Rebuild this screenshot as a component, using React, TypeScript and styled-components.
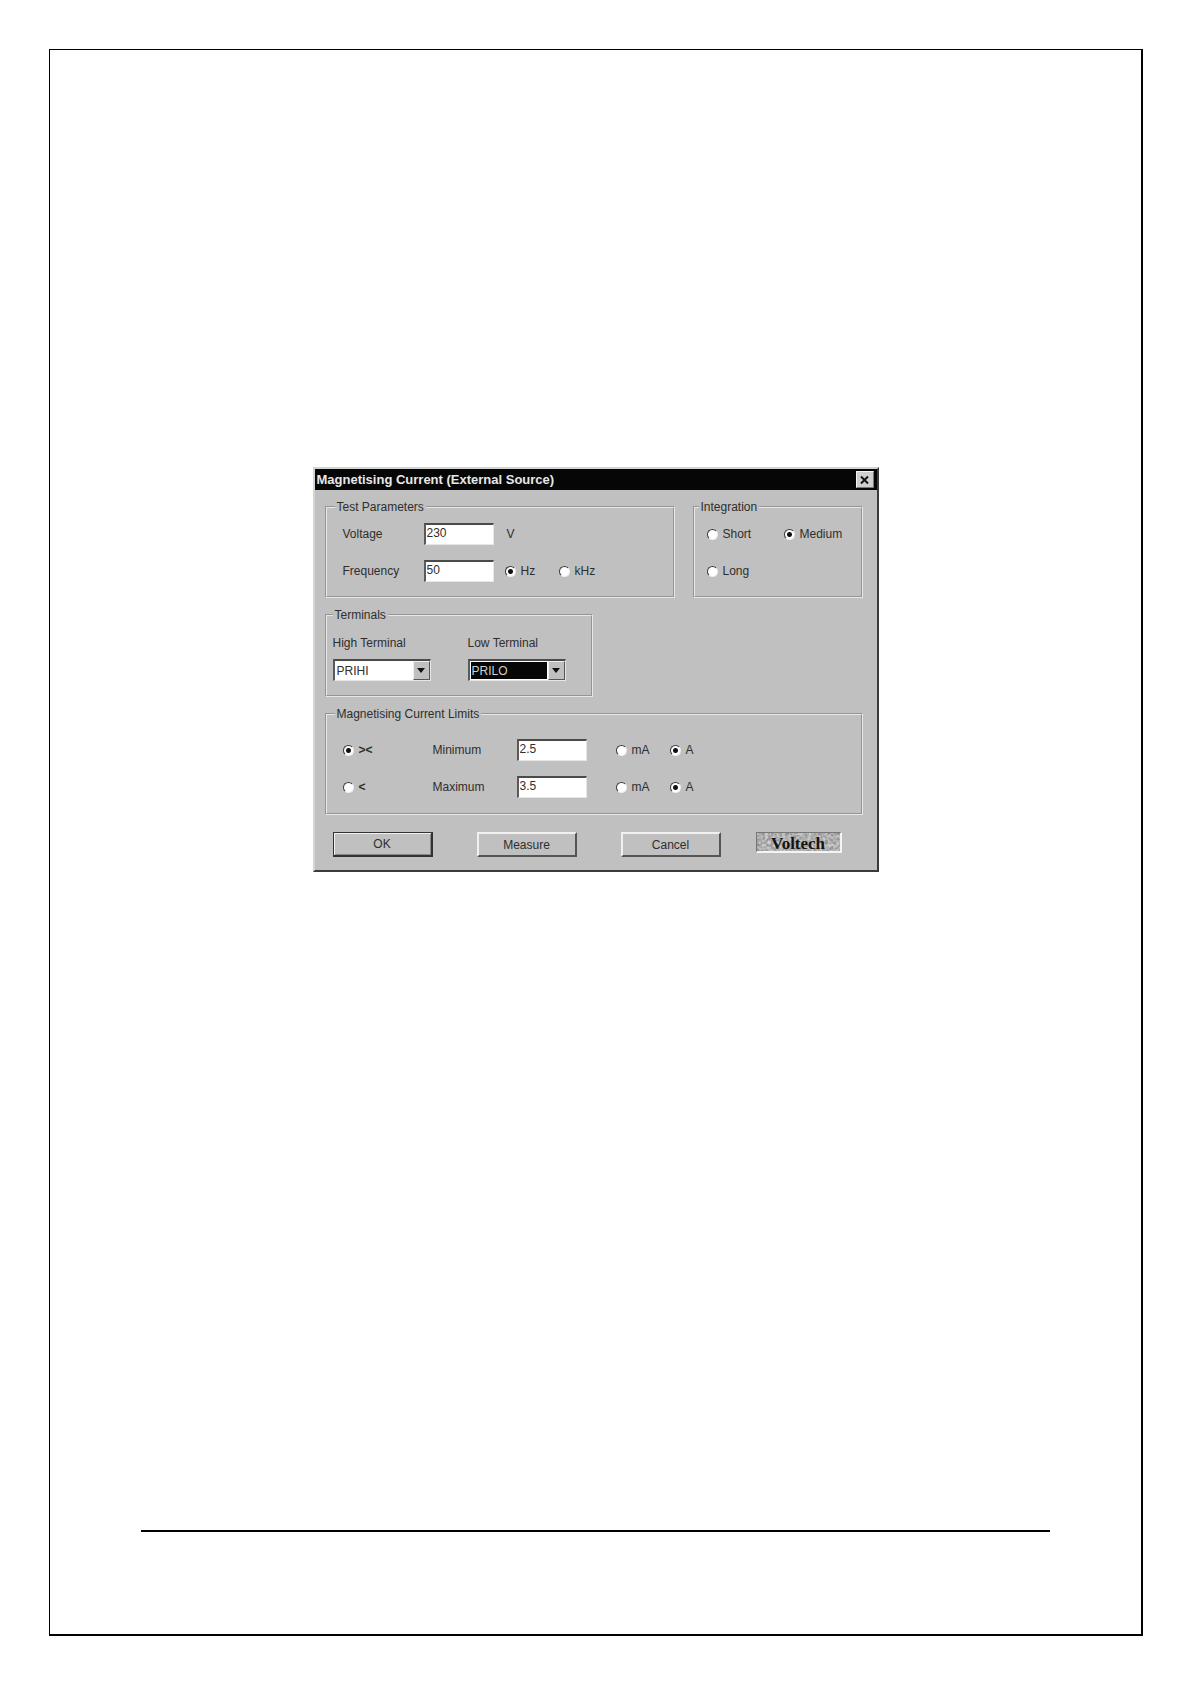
import React, { useId } from "react";
import styled, { createGlobalStyle } from "styled-components";

const face = "#c0c0c0";
const ink = "#2e2e2e";

const GlobalStyle = createGlobalStyle`
  *, *::before, *::after { box-sizing: border-box; }
  body {
    margin: 0;
    background: #fff;
    color: ${ink};
    font: 12px/16px "Liberation Sans", Arial, sans-serif;
  }
  button, input, select { font: inherit; color: inherit; margin: 0; border-radius: 0; }
`;

const Sheet = styled.main`
  display: flex;
  flex-direction: column;
  min-height: calc(100vh - 97px);
  margin: 49px 48px 48px 49px;
  padding: 417px 91px 102px;
  border: solid #000;
  border-width: 1px 2px 2px 1px;
`;

const Rule = styled.hr`
  width: 100%;
  height: 2px;
  margin: auto 0 0;
  border: 0;
  background: #000;
`;

const Dialog = styled.form`
  width: 100%;
  max-width: 566px;
  margin: 0 auto 32px;
  background: ${face};
  border: solid;
  border-width: 2px;
  border-color: #d4d4d4 #3a3a3a #3a3a3a #d4d4d4;
`;

const TitleBar = styled.header`
  display: flex;
  align-items: center;
  justify-content: space-between;
  height: 21px;
  padding: 0 3px 0 2px;
  background: #060606;
`;

const Title = styled.h1`
  margin: 0;
  color: #e8e8e8;
  font-size: 13px;
  line-height: 16px;
  font-weight: 700;
`;

const CloseButton = styled.button`
  display: grid;
  place-items: center;
  width: 18px;
  height: 17px;
  padding: 0;
  background: #cfcfcf;
  border: 1px solid;
  border-color: #f4f4f4 #777 #777 #f4f4f4;
`;

const Body = styled.div`
  display: flex;
  flex-direction: column;
  gap: 9px;
  padding: 9px 14px 13px 10px;
`;

const TopRow = styled.div`
  display: grid;
  grid-template-columns: minmax(0, 1fr) 170px;
  gap: 18px;
`;

const Group = styled.fieldset<{ $pad: string; $width?: string }>`
  width: ${(p) => p.$width ?? "auto"};
  min-width: 0;
  margin: 0;
  padding: ${(p) => p.$pad};
  border: 2px groove #e8e8e8;
`;

const Legend = styled.legend<{ $flush?: boolean }>`
  margin-left: ${(p) => (p.$flush ? 0 : -8)}px;
  padding: 0 2px;
  line-height: 16px;
`;

const Rows = styled.div`
  display: flex;
  flex-direction: column;
  gap: 15px;
`;

const ParameterRow = styled.div`
  display: grid;
  grid-template-columns: 81px 70px 1fr;
  align-items: center;
`;

const LimitRow = styled.div`
  display: grid;
  grid-template-columns: 90px 84px 70px 1fr;
  align-items: center;
`;

const Units = styled.div<{ $indent: number }>`
  display: flex;
  padding-left: ${(p) => p.$indent}px;
`;

const Field = styled.input`
  width: 100%;
  height: 22px;
  padding: 0 1px 3px;
  background: #fff;
  border: solid;
  border-width: 2px 1px 1px 2px;
  border-color: #4a4a4a #e6e6e6 #e6e6e6 #5a5a5a;
  outline: 0;
`;

const OptionLabel = styled.label<{ $width: number; $strong?: boolean }>`
  display: flex;
  align-items: center;
  gap: 5px;
  width: ${(p) => p.$width}px;
  height: 22px;
  font-weight: ${(p) => (p.$strong ? 700 : 400)};
`;

const Radio = styled.input`
  appearance: none;
  width: 11px;
  height: 11px;
  border: 1px solid;
  border-color: #3a3a3a #eee #eee #3a3a3a;
  border-radius: 50%;
  background: #fff;

  &:checked {
    background: radial-gradient(circle, #111 0 2px, #fff 3px);
  }
`;

const Choices = styled.div`
  display: grid;
  grid-template-columns: 77px 1fr;
  row-gap: 15px;
`;

const Terminals = styled.div`
  display: grid;
  grid-template-columns: 98px 98px;
  column-gap: 37px;
`;

const Terminal = styled.div`
  display: flex;
  flex-direction: column;
  gap: 8px;
`;

const Combo = styled.div`
  position: relative;
  height: 22px;
  padding: 1px;
  background: #fff;
  border: solid;
  border-width: 2px 1px 1px 2px;
  border-color: #4a4a4a #e6e6e6 #e6e6e6 #5a5a5a;
`;

const Select = styled.select<{ $active?: boolean }>`
  appearance: none;
  display: block;
  width: calc(100% - 17px);
  height: 17px;
  padding: 0 1px;
  border: 0;
  outline: 0;
  line-height: 16px;
  background: ${(p) => (p.$active ? "#060606" : "#fff")};
  color: ${(p) => (p.$active ? "#d0d0d0" : ink)};
`;

const Arrow = styled.span`
  position: absolute;
  top: 0;
  right: 0;
  display: grid;
  place-items: center;
  width: 17px;
  height: 19px;
  background: ${face};
  border: 1px solid;
  border-color: #eee #555 #555 #eee;
  pointer-events: none;
`;

const Actions = styled.div`
  display: flex;
  gap: 44px;
  padding: 8px 0 0 8px;
`;

const ActionButton = styled.button<{ $primary?: boolean }>`
  width: 100px;
  height: 25px;
  padding: 0;
  background: ${face};
  border: solid;
  border-width: ${(p) => (p.$primary ? "1px 2px 2px 1px" : "2px")};
  border-color: ${(p) =>
    p.$primary ? "#333" : "#f0f0f0 #555 #555 #f0f0f0"};
  box-shadow: ${(p) =>
    p.$primary ? "inset 1px 1px #f0f0f0, inset -1px -1px #888" : "none"};
`;

const Logo = styled.div`
  position: relative;
  width: 86px;
  height: 21px;
  margin-left: -9px;
  border: solid;
  border-width: 1px 2px 2px 1px;
  border-color: #777 #f4f4f4 #f4f4f4 #777;
  background: #b0b0b0;
  color: #141414;
  text-align: center;
  font: 700 17px/21px "Liberation Serif", "Times New Roman", serif;
`;

const Grain = styled.svg`
  position: absolute;
  inset: 0;
  width: 100%;
  height: 100%;
`;

const LogoText = styled.span`
  position: relative;
`;

function Option(props: {
  name: string;
  text: string;
  width: number;
  checked?: boolean;
  strong?: boolean;
}) {
  return (
    <OptionLabel $width={props.width} $strong={props.strong}>
      <Radio type="radio" name={props.name} defaultChecked={props.checked} />
      {props.text}
    </OptionLabel>
  );
}

function TerminalPicker(props: {
  label: string;
  value: string;
  active?: boolean;
}) {
  const id = useId();
  return (
    <Terminal>
      <label htmlFor={id}>{props.label}</label>
      <Combo>
        <Select id={id} defaultValue={props.value} $active={props.active}>
          <option>{props.value}</option>
        </Select>
        <Arrow aria-hidden="true">
          <svg width="8" height="5" viewBox="0 0 8 5">
            <path d="M0 0h8L4 5z" fill="#111" />
          </svg>
        </Arrow>
      </Combo>
    </Terminal>
  );
}

function Limit(props: {
  mode: string;
  label: string;
  value: string;
  checked?: boolean;
}) {
  const id = useId();
  return (
    <LimitRow>
      <Option
        name="mode"
        text={props.mode}
        width={60}
        checked={props.checked}
        strong
      />
      <label htmlFor={id}>{props.label}</label>
      <Field id={id} defaultValue={props.value} />
      <Units $indent={29}>
        <Option name={`${props.label}-unit`} text="mA" width={54} />
        <Option name={`${props.label}-unit`} text="A" width={54} checked />
      </Units>
    </LimitRow>
  );
}

export default function App() {
  return (
    <>
      <GlobalStyle />
      <Sheet>
        <Dialog onSubmit={(e) => e.preventDefault()}>
          <TitleBar>
            <Title>Magnetising Current (External Source)</Title>
            <CloseButton type="button" aria-label="Close">
              <svg width="9" height="8" viewBox="0 0 9 8">
                <path d="M1 0.5L8 7.5M8 0.5L1 7.5" stroke="#111" strokeWidth="2" />
              </svg>
            </CloseButton>
          </TitleBar>
          <Body>
            <TopRow>
              <Group $pad="8px 14px 14px 16px">
                <Legend>Test Parameters</Legend>
                <Rows>
                  <ParameterRow>
                    <label htmlFor="voltage">Voltage</label>
                    <Field id="voltage" defaultValue="230" />
                    <Units $indent={13}>V</Units>
                  </ParameterRow>
                  <ParameterRow>
                    <label htmlFor="frequency">Frequency</label>
                    <Field id="frequency" defaultValue="50" />
                    <Units $indent={11}>
                      <Option name="frequency-unit" text="Hz" width={54} checked />
                      <Option name="frequency-unit" text="kHz" width={54} />
                    </Units>
                  </ParameterRow>
                </Rows>
              </Group>
              <Group $pad="8px 12px 14px">
                <Legend>Integration</Legend>
                <Choices>
                  <Option name="integration" text="Short" width={60} />
                  <Option name="integration" text="Medium" width={62} checked />
                  <Option name="integration" text="Long" width={60} />
                </Choices>
              </Group>
            </TopRow>
            <Group $pad="12px 6px 14px" $width="268px">
              <Legend $flush>Terminals</Legend>
              <Terminals>
                <TerminalPicker label="High Terminal" value="PRIHI" />
                <TerminalPicker label="Low Terminal" value="PRILO" active />
              </Terminals>
            </Group>
            <Group $pad="17px 14px 15px 16px">
              <Legend>Magnetising Current Limits</Legend>
              <Rows>
                <Limit mode="><" label="Minimum" value="2.5" checked />
                <Limit mode="<" label="Maximum" value="3.5" />
              </Rows>
            </Group>
            <Actions>
              <ActionButton type="submit" $primary>
                OK
              </ActionButton>
              <ActionButton type="button">Measure</ActionButton>
              <ActionButton type="button">Cancel</ActionButton>
              <Logo>
                <Grain aria-hidden="true">
                  <filter id="grain" colorInterpolationFilters="sRGB">
                    <feTurbulence type="fractalNoise" baseFrequency="0.35" numOctaves="2" seed="4" />
                    <feColorMatrix values="0.5 0 0 0 0.44  0.5 0 0 0 0.44  0.5 0 0 0 0.44  0 0 0 0 1" />
                  </filter>
                  <rect width="100%" height="100%" filter="url(#grain)" />
                </Grain>
                <LogoText>Voltech</LogoText>
              </Logo>
            </Actions>
          </Body>
        </Dialog>
        <Rule />
      </Sheet>
    </>
  );
}
